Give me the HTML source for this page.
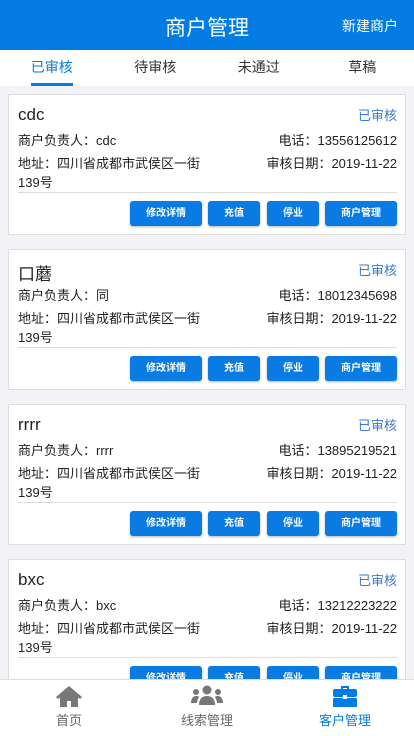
<!DOCTYPE html><html><head><meta charset="utf-8"><style>
*{margin:0;padding:0;box-sizing:border-box}
body{width:414px;height:736px;overflow:hidden;background:#f3f3f7;font-family:"Liberation Sans","Noto Sans CJK SC",sans-serif;position:relative;color:#222}
.hd{height:50px;background:#027be3;color:#fff;position:relative}
.hd .t{position:absolute;left:0;right:0;top:12px;text-align:center;font-size:21px}
.hd .r{position:absolute;right:16px;top:16px;font-size:14px}
.tabs{height:36px;background:#fff;display:flex;position:relative}
.tabs div{flex:1;text-align:center;font-size:14px;line-height:34px;color:#333}
.tabs .a{color:#027be3}
.ul{position:absolute;left:31px;top:33px;width:42px;height:3px;background:#027be3}
.card{position:absolute;left:8px;width:398px;height:141px;background:#fff;border:1px solid #ddd}
.nm{position:absolute;left:9px;top:10px;font-size:17px}
.st{position:absolute;right:8px;top:10px;font-size:13px;color:#3a78d6}
.row{position:absolute;left:9px;right:8px;font-size:13px;line-height:19px;display:flex;justify-content:space-between}
.ln{position:absolute;left:9px;right:8px;top:97px;height:1px;background:#ddd}
.b{position:absolute;top:106px;height:25px;background:#0a7be2;color:#fff;font-size:10px;font-weight:bold;text-align:center;line-height:25px;border-radius:3px;box-shadow:0 1px 2px rgba(0,0,0,.3)}
.nav{position:absolute;left:0;top:679px;width:414px;height:57px;background:#fff;border-top:1px solid #ddd;display:flex}
.nav div{flex:1;text-align:center;font-size:13px;color:#666;padding-top:5px}
.nav svg{display:block;margin:0 auto 3px}
</style></head><body>
<div class="hd"><div class="t">商户管理</div><div class="r">新建商户</div></div>
<div class="tabs"><div class="a">已审核</div><div>待审核</div><div>未通过</div><div>草稿</div><span class="ul"></span></div>

<div class="card" style="top:94px"><div class="nm">cdc</div><div class="st">已审核</div>
<div class="row" style="top:36px"><span>商户负责人：cdc</span><span>电话：13556125612</span></div>
<div class="row" style="top:59px"><span>地址：四川省成都市武侯区一街<br>139号</span><span>审核日期：2019-11-22</span></div>
<div class="ln"></div><div class="b" style="left:121px;width:72px">修改详情</div><div class="b" style="left:199px;width:52px">充值</div><div class="b" style="left:258px;width:52px">停业</div><div class="b" style="left:316px;width:72px">商户管理</div></div>

<div class="card" style="top:249px"><div class="nm">口蘑</div><div class="st">已审核</div>
<div class="row" style="top:36px"><span>商户负责人：同</span><span>电话：18012345698</span></div>
<div class="row" style="top:59px"><span>地址：四川省成都市武侯区一街<br>139号</span><span>审核日期：2019-11-22</span></div>
<div class="ln"></div><div class="b" style="left:121px;width:72px">修改详情</div><div class="b" style="left:199px;width:52px">充值</div><div class="b" style="left:258px;width:52px">停业</div><div class="b" style="left:316px;width:72px">商户管理</div></div>

<div class="card" style="top:404px"><div class="nm">rrrr</div><div class="st">已审核</div>
<div class="row" style="top:36px"><span>商户负责人：rrrr</span><span>电话：13895219521</span></div>
<div class="row" style="top:59px"><span>地址：四川省成都市武侯区一街<br>139号</span><span>审核日期：2019-11-22</span></div>
<div class="ln"></div><div class="b" style="left:121px;width:72px">修改详情</div><div class="b" style="left:199px;width:52px">充值</div><div class="b" style="left:258px;width:52px">停业</div><div class="b" style="left:316px;width:72px">商户管理</div></div>

<div class="card" style="top:559px"><div class="nm">bxc</div><div class="st">已审核</div>
<div class="row" style="top:36px"><span>商户负责人：bxc</span><span>电话：13212223222</span></div>
<div class="row" style="top:59px"><span>地址：四川省成都市武侯区一街<br>139号</span><span>审核日期：2019-11-22</span></div>
<div class="ln"></div><div class="b" style="left:121px;width:72px">修改详情</div><div class="b" style="left:199px;width:52px">充值</div><div class="b" style="left:258px;width:52px">停业</div><div class="b" style="left:316px;width:72px">商户管理</div></div>

<div class="nav">
<div><svg width="28" height="22" viewBox="0 0 28 22"><path d="M14 1L1 12l2 2 11-9 11 9 2-2z" fill="#777"/><path d="M5 12v10h7v-6h4v6h7V12L14 5z" fill="#777"/></svg>首页</div>
<div><svg width="32" height="22" viewBox="0 0 32 22"><circle cx="16" cy="5" r="4.5" fill="#777"/><circle cx="5" cy="7" r="3" fill="#777"/><circle cx="27" cy="7" r="3" fill="#777"/><path d="M8 20c0-6 3-9 8-9s8 3 8 9z" fill="#777"/><path d="M0 18c0-4 2-7 5-7s3 1 3 1c-1 2-2 4-2 6z M32 18c0-4-2-7-5-7s-3 1-3 1c1 2 2 4 2 6z" fill="#777"/></svg>线索管理</div>
<div style="color:#027be3"><svg width="26" height="22" viewBox="0 0 26 22"><path d="M9 1h8v3h-2V3h-4v1H9z" fill="#027be3"/><rect x="1" y="4" width="24" height="8" rx="2" fill="#027be3"/><rect x="1" y="13" width="24" height="9" rx="1" fill="#027be3"/><rect x="11" y="10" width="4" height="4" fill="#fff"/></svg>客户管理</div>
</div>
</body></html>
